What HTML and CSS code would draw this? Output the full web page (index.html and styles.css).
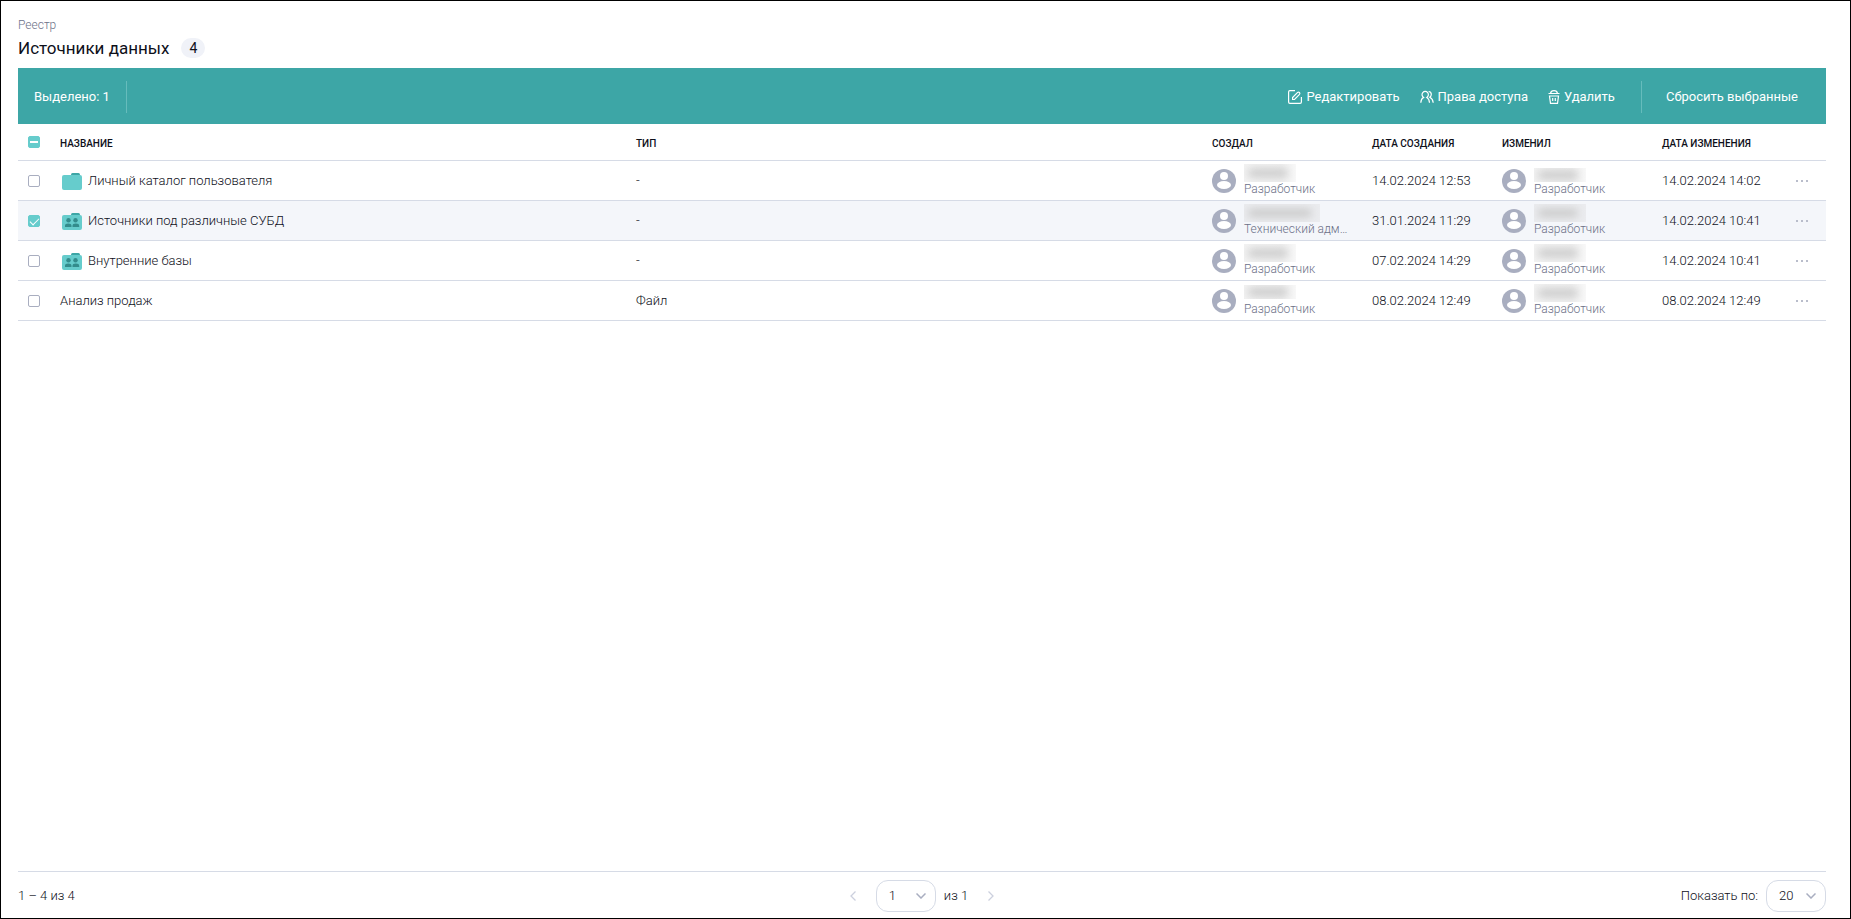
FILE: index.html
```
<!DOCTYPE html>
<html lang="ru">
<head>
<meta charset="utf-8">
<title>Источники данных</title>
<link rel="stylesheet" href="styles.css">
</head>
<body>
<svg class="sprite" aria-hidden="true">
  <symbol id="user" viewBox="0 0 24 24"><circle cx="12" cy="12" r="12" fill="#a9aec0"/><circle cx="12" cy="7" r="4" fill="#fff"/><ellipse cx="12" cy="16" rx="7" ry="4" fill="#fff"/></symbol>
  <symbol id="folder" viewBox="0 0 20 17"><path d="M9 3V1.500Q9 0 10.500 0H16.500Q18 0 18 1.500V3Z" fill="#3da6a6"/><rect y="2" width="20" height="15" rx="2" fill="#66cccc"/></symbol>
  <symbol id="shared" viewBox="0 0 20 17"><use href="#folder"/><g fill="#338c8c"><circle cx="6.500" cy="7.200" r="2.200"/><circle cx="13.500" cy="7.200" r="2.200"/><path d="M3 14V12.800Q3 10.500 6.200 10.500T9.500 12.800V14ZM10.500 14V12.800Q10.500 10.500 13.800 10.500T17.200 12.800V14Z"/></g></symbol>
  <symbol id="dots" viewBox="0 0 14 2"><path d="M0 0h2v2H0zM5 0h2v2H5zM10 0h2v2h-2z" fill="#b9bdcb"/></symbol>
</svg>
<div class="page">
  <header class="head">
    <a class="crumb" href="#">Реестр</a>
    <div class="title-row"><h1 class="title">Источники данных</h1><span class="count">4</span></div>
  </header>
  <div class="toolbar">
    <span class="selected">Выделено: 1</span>
    <span class="divider"></span>
    <div class="actions">
      <button class="action" type="button"><svg width="14" height="14" viewBox="0 0 14 14"><path d="M7 .6H1.900Q.6.600.6 1.900V12.100Q.6 13.400 1.900 13.400H12.100Q13.400 13.400 13.400 12.100V7M4.600 9.500V7.600L9.600 2.400Q10.500 1.600 11.400 2.500T11.500 4.300L6.500 9.500Z"/></svg>Редактировать</button>
      <button class="action" type="button"><svg width="14" height="14" viewBox="0 0 14 14"><path d="M.8 12.800Q1 8.800 3.600 7.400A3.200 3.200 0 1 1 6.800 7.400Q9.300 8.800 9.500 12.800M8.600 1.500Q11.400 1.800 11.300 4.500 11.200 6.400 9.800 7.300 12.900 8.700 13.200 12.800"/></svg>Права доступа</button>
      <button class="action" type="button"><svg width="12" height="14" viewBox="0 0 12 14"><path d="M.5 3.500H11.500M2.500 3.300Q3 .7 6 .7T9.500 3.300M1.500 6H10.500L9.500 13.300H2.500ZM4.700 8V11M7.300 8V11"/></svg>Удалить</button>
    </div>
    <span class="divider"></span>
    <button class="action reset" type="button">Сбросить выбранные</button>
  </div>
  <table class="grid">
    <colgroup><col class="c-check"><col><col><col class="c-user"><col class="c-date"><col class="c-user"><col class="c-date"><col class="c-menu"></colgroup>
    <thead><tr>
      <th class="pick"><input class="check mixed" type="checkbox" aria-label="Выбрать все"></th>
      <th>Название</th><th>Тип</th><th>Создал</th><th>Дата создания</th><th>Изменил</th><th>Дата изменения</th><th></th>
    </tr></thead>
    <tbody>
      <tr>
        <td class="pick"><input class="check" type="checkbox" aria-label="Личный каталог пользователя"></td>
        <td><div class="name"><svg class="folder"><use href="#folder"/></svg>Личный каталог пользователя</div></td><td>-</td>
        <td><div class="user"><svg class="avatar"><use href="#user"/></svg><div class="who"><span class="mask"></span><span class="role">Разработчик</span></div></div></td>
        <td>14.02.2024 12:53</td>
        <td><div class="user"><svg class="avatar"><use href="#user"/></svg><div class="who"><span class="mask low"></span><span class="role">Разработчик</span></div></div></td>
        <td>14.02.2024 14:02</td>
        <td><button class="more" type="button" aria-label="Действия"><svg width="14" height="2"><use href="#dots"/></svg></button></td>
      </tr>
      <tr class="active">
        <td class="pick"><input class="check" type="checkbox" checked aria-label="Источники под различные СУБД"></td>
        <td><div class="name"><svg class="folder"><use href="#shared"/></svg>Источники под различные СУБД</div></td><td>-</td>
        <td><div class="user"><svg class="avatar"><use href="#user"/></svg><div class="who"><span class="mask wide"></span><span class="role">Технический адм…</span></div></div></td>
        <td>31.01.2024 11:29</td>
        <td><div class="user"><svg class="avatar"><use href="#user"/></svg><div class="who"><span class="mask"></span><span class="role">Разработчик</span></div></div></td>
        <td>14.02.2024 10:41</td>
        <td><button class="more" type="button" aria-label="Действия"><svg width="14" height="2"><use href="#dots"/></svg></button></td>
      </tr>
      <tr>
        <td class="pick"><input class="check" type="checkbox" aria-label="Внутренние базы"></td>
        <td><div class="name"><svg class="folder"><use href="#shared"/></svg>Внутренние базы</div></td><td>-</td>
        <td><div class="user"><svg class="avatar"><use href="#user"/></svg><div class="who"><span class="mask"></span><span class="role">Разработчик</span></div></div></td>
        <td>07.02.2024 14:29</td>
        <td><div class="user"><svg class="avatar"><use href="#user"/></svg><div class="who"><span class="mask"></span><span class="role">Разработчик</span></div></div></td>
        <td>14.02.2024 10:41</td>
        <td><button class="more" type="button" aria-label="Действия"><svg width="14" height="2"><use href="#dots"/></svg></button></td>
      </tr>
      <tr>
        <td class="pick"><input class="check" type="checkbox" aria-label="Анализ продаж"></td>
        <td>Анализ продаж</td><td>Файл</td>
        <td><div class="user"><svg class="avatar"><use href="#user"/></svg><div class="who"><span class="mask low raised"></span><span class="role">Разработчик</span></div></div></td>
        <td>08.02.2024 12:49</td>
        <td><div class="user"><svg class="avatar"><use href="#user"/></svg><div class="who"><span class="mask"></span><span class="role">Разработчик</span></div></div></td>
        <td>08.02.2024 12:49</td>
        <td><button class="more" type="button" aria-label="Действия"><svg width="14" height="2"><use href="#dots"/></svg></button></td>
      </tr>
    </tbody>
  </table>
  <footer class="foot">
    <span class="range">1 – 4 из 4</span>
    <div class="pager">
      <button class="step" type="button" aria-label="Назад"><svg width="6" height="10" viewBox="0 0 6 10"><path d="M5.500.5 1 5l4.500 4.500"/></svg></button>
      <span class="picker"><select class="select" aria-label="Страница"><option>1</option></select><svg class="chevron" width="10" height="6" viewBox="0 0 10 6"><path d="M.5.5 5 5 9.500.5"/></svg></span>
      <span>из 1</span>
      <button class="step next" type="button" aria-label="Вперёд"><svg width="6" height="10" viewBox="0 0 6 10"><path d="M.5.5 5 5 .5 9.500"/></svg></button>
    </div>
    <div class="size">
      <label for="size">Показать по:</label>
      <span class="picker"><select class="select" id="size"><option>20</option></select><svg class="chevron" width="10" height="6" viewBox="0 0 10 6"><path d="M.5.5 5 5 9.500.5"/></svg></span>
    </div>
  </footer>
</div>
</body>
</html>
```
FILE: styles.css
```
* { box-sizing: border-box; }
body { margin: 0; background: #fff; color: #0e101a; font: 300 13px/16px Roboto, sans-serif; }
button { border: 0; padding: 0; background: none; font: inherit; color: inherit; cursor: pointer; }
.sprite { position: absolute; width: 0; height: 0; }
.page { display: flex; flex-direction: column; min-height: 100vh; padding: 16px 24px 0 17px; border: 1px solid #000; }
.head { display: flex; flex-direction: column; align-items: flex-start; height: 51px; }
.crumb { color: #6c7188; font-size: 12px; line-height: 16px; text-decoration: none; }
.title-row { display: flex; align-items: center; gap: 12px; margin-top: 5px; }
.title { margin: 0; font-size: 17px; line-height: 20px; font-weight: 400; }
.count { min-width: 24px; padding: 0 8px; border-radius: 10px; background: #f0f2f8; font-size: 14px; line-height: 20px; text-align: center; font-weight: 400; }
.toolbar { display: flex; align-items: center; height: 56px; padding: 1px 28px 0 16px; background: #3da6a6; color: #fff; font-weight: 400; }
.divider { width: 1px; height: 32px; margin: 0 24px 0 16px; background: #66bcbc; }
.actions { display: flex; gap: 20px; margin-left: auto; }
.actions + .divider { margin-left: 26px; }
.action { display: flex; align-items: center; gap: 4px; }
.action svg { fill: none; stroke: #fff; stroke-width: 1.2; }
.grid { width: 100%; border-collapse: collapse; table-layout: fixed; }
.c-check { width: 42px; }
.c-user { width: 160px; }
.c-date { width: 130px; }
.c-menu { width: 34px; }
th, td { padding: 2px 0 0; text-align: left; vertical-align: middle; border-bottom: 1px solid #d6dbe6; }
th { height: 36px; padding-top: 4px; font-size: 10px; font-weight: 500; text-transform: uppercase; }
td { height: 40px; }
.pick { padding: 1px 0 0 10px; }
.active { background: #f4f6fa; }
.check { appearance: none; display: block; width: 12px; height: 12px; margin: 0; border: 1px solid #a9aec0; border-radius: 2px; background: #fff; }
.check:checked, .mixed { border-color: #66cccc; background: #66cccc; }
.check:checked::before { content: ""; display: block; width: 8px; height: 4px; margin: 2px 1px; border: solid #fff; border-width: 0 0 1px 1px; transform: rotate(-45deg); }
.mixed::before { content: ""; display: block; width: 8px; height: 2px; margin: 4px 1px; background: #fff; }
.name { display: flex; align-items: center; gap: 6px; padding-left: 2px; }
.folder { width: 20px; height: 17px; }
.user { display: flex; align-items: center; gap: 8px; }
.avatar { flex: none; width: 24px; height: 24px; }
.who { display: flex; flex-direction: column; min-width: 0; height: 36px; padding-bottom: 3px; justify-content: flex-end; }
.mask { width: 52px; height: 18px; background: linear-gradient(90deg, #f3f3f3, #f0f0f0 70%, #f8f8f8); overflow: hidden; }
.mask::before { content: ""; display: block; height: 8px; margin: 5px 8px 5px 4px; border-radius: 4px; background: #c8c8c8; filter: blur(4px); }
.mask.low { height: 14px; }
.mask.low::before { margin-top: 3px; }
.mask.raised { margin-bottom: 3px; }
.mask.wide { width: 76px; }
.active .mask { background: #ebecef; }
.role { white-space: nowrap; color: #6c7188; font-size: 12px; line-height: 14px; }
.more { display: flex; padding: 8px 4px; }
.foot { display: grid; grid-template-columns: 1fr auto 1fr; align-items: center; height: 47px; margin-top: auto; padding-top: 2px; border-top: 1px solid #d6dbe6; }
.pager, .size { display: flex; align-items: center; gap: 8px; }
.size { justify-content: flex-end; }
.step { display: flex; padding: 4px 12px 4px 0; }
.step.next { padding: 4px 0 4px 12px; }
.step svg { fill: none; stroke: #ccd0de; stroke-width: 1.300; }
.picker { display: grid; align-items: center; }
.select { grid-area: 1 / 1; appearance: none; width: 60px; height: 32px; padding: 0 12px; border: 1px solid #d6dbe6; border-radius: 12px; background: #fff; color: inherit; font: inherit; }
.chevron { grid-area: 1 / 1; justify-self: end; margin-right: 10px; pointer-events: none; fill: none; stroke: #a9aec0; stroke-width: 1.500; }
```
